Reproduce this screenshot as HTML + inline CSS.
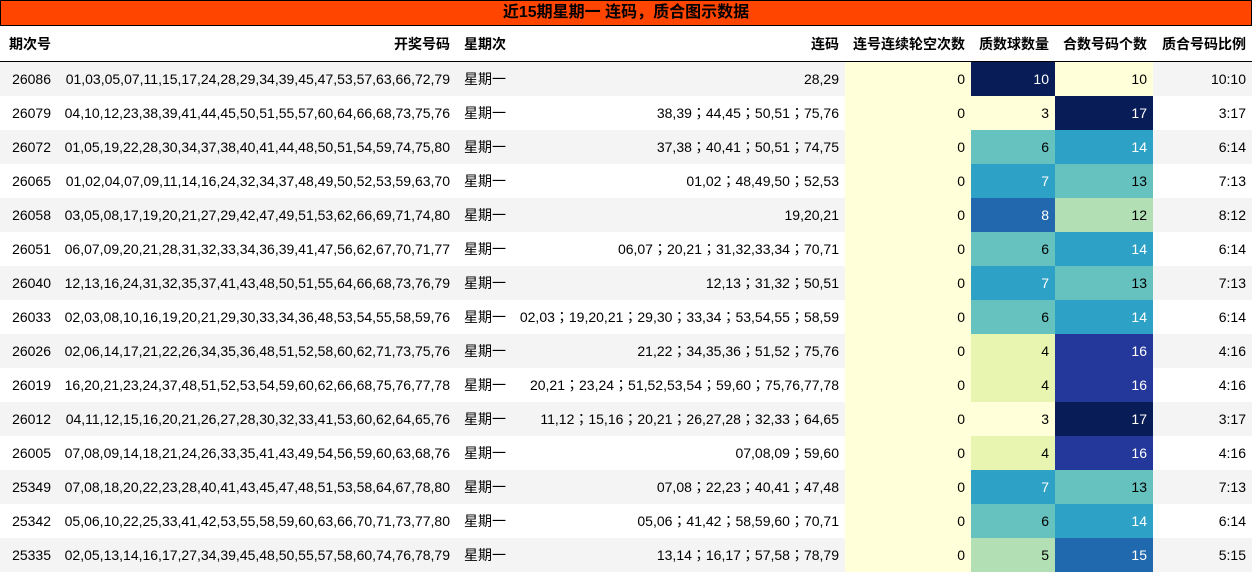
<!DOCTYPE html>
<html><head><meta charset="utf-8"><style>
body{margin:0;width:1252px;height:573px;overflow:hidden;background:#fff;font-family:"Liberation Sans","Noto Sans CJK SC",sans-serif;font-size:14px;color:#000}
.t{height:24px;background:#ff4500;border:1px solid #000;text-align:center;font-weight:bold;font-size:16px;line-height:24px}
table{border-collapse:collapse;table-layout:fixed;width:1252px}
th{height:35px;font-weight:bold;text-align:right;padding:0 6px;border-bottom:1px solid #000;white-space:nowrap}
td{height:34px;text-align:right;padding:0 6px;white-space:nowrap}
td:nth-child(4){font-family:"Liberation Sans","Noto Sans CJK JP",sans-serif}
tr:nth-child(even) td{background:#f4f4f4}
td.z{background:#ffffd9!important}
.w{color:#fff}
</style></head><body>
<div class="t">近15期星期一 连码，质合图示数据</div>
<table>
<colgroup><col style="width:57px"><col style="width:399px"><col style="width:56px"><col style="width:333px"><col style="width:126px"><col style="width:84px"><col style="width:98px"><col style="width:99px"></colgroup>
<tr><th>期次号</th><th>开奖号码</th><th>星期次</th><th>连码</th><th>连号连续轮空次数</th><th>质数球数量</th><th>合数号码个数</th><th>质合号码比例</th></tr>
<tr><td>26086</td><td>01,03,05,07,11,15,17,24,28,29,34,39,45,47,53,57,63,66,72,79</td><td>星期一</td><td>28,29</td><td class="z">0</td><td class="w" style="background:#081d58!important">10</td><td style="background:#ffffd9!important">10</td><td>10:10</td></tr>
<tr><td>26079</td><td>04,10,12,23,38,39,41,44,45,50,51,55,57,60,64,66,68,73,75,76</td><td>星期一</td><td>38,39；44,45；50,51；75,76</td><td class="z">0</td><td style="background:#ffffd9!important">3</td><td class="w" style="background:#081d58!important">17</td><td>3:17</td></tr>
<tr><td>26072</td><td>01,05,19,22,28,30,34,37,38,40,41,44,48,50,51,54,59,74,75,80</td><td>星期一</td><td>37,38；40,41；50,51；74,75</td><td class="z">0</td><td style="background:#66c2bf!important">6</td><td class="w" style="background:#2ea1c6!important">14</td><td>6:14</td></tr>
<tr><td>26065</td><td>01,02,04,07,09,11,14,16,24,32,34,37,48,49,50,52,53,59,63,70</td><td>星期一</td><td>01,02；48,49,50；52,53</td><td class="z">0</td><td class="w" style="background:#2ea1c6!important">7</td><td style="background:#66c2bf!important">13</td><td>7:13</td></tr>
<tr><td>26058</td><td>03,05,08,17,19,20,21,27,29,42,47,49,51,53,62,66,69,71,74,80</td><td>星期一</td><td>19,20,21</td><td class="z">0</td><td class="w" style="background:#2268ae!important">8</td><td style="background:#b2e0b4!important">12</td><td>8:12</td></tr>
<tr><td>26051</td><td>06,07,09,20,21,28,31,32,33,34,36,39,41,47,56,62,67,70,71,77</td><td>星期一</td><td>06,07；20,21；31,32,33,34；70,71</td><td class="z">0</td><td style="background:#66c2bf!important">6</td><td class="w" style="background:#2ea1c6!important">14</td><td>6:14</td></tr>
<tr><td>26040</td><td>12,13,16,24,31,32,35,37,41,43,48,50,51,55,64,66,68,73,76,79</td><td>星期一</td><td>12,13；31,32；50,51</td><td class="z">0</td><td class="w" style="background:#2ea1c6!important">7</td><td style="background:#66c2bf!important">13</td><td>7:13</td></tr>
<tr><td>26033</td><td>02,03,08,10,16,19,20,21,29,30,33,34,36,48,53,54,55,58,59,76</td><td>星期一</td><td>02,03；19,20,21；29,30；33,34；53,54,55；58,59</td><td class="z">0</td><td style="background:#66c2bf!important">6</td><td class="w" style="background:#2ea1c6!important">14</td><td>6:14</td></tr>
<tr><td>26026</td><td>02,06,14,17,21,22,26,34,35,36,48,51,52,58,60,62,71,73,75,76</td><td>星期一</td><td>21,22；34,35,36；51,52；75,76</td><td class="z">0</td><td style="background:#e8f5b0!important">4</td><td class="w" style="background:#24379a!important">16</td><td>4:16</td></tr>
<tr><td>26019</td><td>16,20,21,23,24,37,48,51,52,53,54,59,60,62,66,68,75,76,77,78</td><td>星期一</td><td>20,21；23,24；51,52,53,54；59,60；75,76,77,78</td><td class="z">0</td><td style="background:#e8f5b0!important">4</td><td class="w" style="background:#24379a!important">16</td><td>4:16</td></tr>
<tr><td>26012</td><td>04,11,12,15,16,20,21,26,27,28,30,32,33,41,53,60,62,64,65,76</td><td>星期一</td><td>11,12；15,16；20,21；26,27,28；32,33；64,65</td><td class="z">0</td><td style="background:#ffffd9!important">3</td><td class="w" style="background:#081d58!important">17</td><td>3:17</td></tr>
<tr><td>26005</td><td>07,08,09,14,18,21,24,26,33,35,41,43,49,54,56,59,60,63,68,76</td><td>星期一</td><td>07,08,09；59,60</td><td class="z">0</td><td style="background:#e8f5b0!important">4</td><td class="w" style="background:#24379a!important">16</td><td>4:16</td></tr>
<tr><td>25349</td><td>07,08,18,20,22,23,28,40,41,43,45,47,48,51,53,58,64,67,78,80</td><td>星期一</td><td>07,08；22,23；40,41；47,48</td><td class="z">0</td><td class="w" style="background:#2ea1c6!important">7</td><td style="background:#66c2bf!important">13</td><td>7:13</td></tr>
<tr><td>25342</td><td>05,06,10,22,25,33,41,42,53,55,58,59,60,63,66,70,71,73,77,80</td><td>星期一</td><td>05,06；41,42；58,59,60；70,71</td><td class="z">0</td><td style="background:#66c2bf!important">6</td><td class="w" style="background:#2ea1c6!important">14</td><td>6:14</td></tr>
<tr><td>25335</td><td>02,05,13,14,16,17,27,34,39,45,48,50,55,57,58,60,74,76,78,79</td><td>星期一</td><td>13,14；16,17；57,58；78,79</td><td class="z">0</td><td style="background:#b2e0b4!important">5</td><td class="w" style="background:#2169ae!important">15</td><td>5:15</td></tr>
</table>
</body></html>
